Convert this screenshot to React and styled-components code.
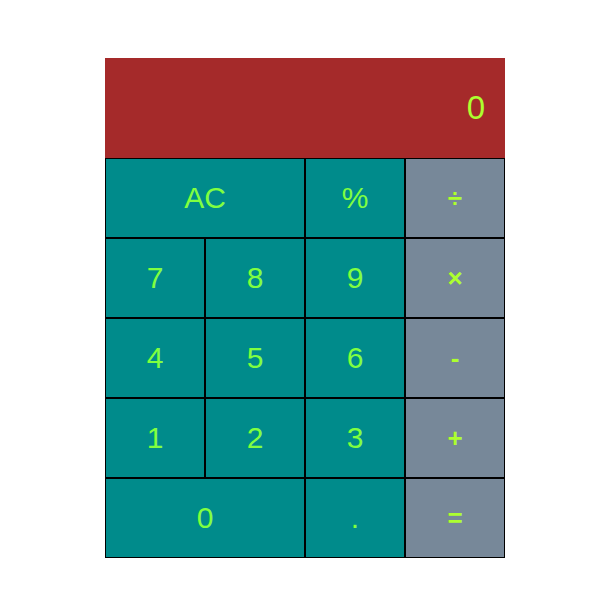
import React, { useState } from "react"
import styled, { createGlobalStyle } from "styled-components"

const GlobalStyle = createGlobalStyle`
  body {
    margin: 0;
    background-color: #fff;
    font-family: "Liberation Sans", Arial, sans-serif;
  }
`

const Page = styled.div`
  padding: 58px 0 0 105px;
`

const Calculator = styled.div`
  width: 400px;
`

const Display = styled.div`
  height: 100px;
  box-sizing: border-box;
  padding-right: 20px;
  display: flex;
  align-items: center;
  justify-content: flex-end;
  background-color: #a52a2a;
  color: #adff2f;
  font-size: 33px;
`

const Keys = styled.div`
  display: grid;
  grid-template-columns: repeat(4, 100px);
  grid-auto-rows: 80px;
`

const Key = styled.button`
  grid-column: span ${(props) => props.$span || 1};
  box-sizing: border-box;
  margin: 0;
  padding: 0;
  border: 1px solid #000;
  background-color: ${(props) => (props.$op ? "#778899" : "#008b8b")};
  color: ${(props) => (props.$op ? "#adff2f" : "#80ff40")};
  font-family: "Liberation Sans", Arial, sans-serif;
  font-size: ${(props) => (props.$op ? "26px" : "30px")};
  font-weight: ${(props) => (props.$op ? "bold" : "normal")};
  cursor: pointer;
`

const keys = [
  { label: "AC", span: 2 },
  { label: "%" },
  { label: "÷", op: true },
  { label: "7" },
  { label: "8" },
  { label: "9" },
  { label: "×", op: true },
  { label: "4" },
  { label: "5" },
  { label: "6" },
  { label: "-", op: true },
  { label: "1" },
  { label: "2" },
  { label: "3" },
  { label: "+", op: true },
  { label: "0", span: 2 },
  { label: "." },
  { label: "=", op: true },
]

function App() {
  const [Value, setValue] = useState("0")

  const onPress = (label) => {
    if (label === "AC") setValue("0")
  }

  return (
    <>
      <GlobalStyle />
      <Page>
        <Calculator>
          <Display>{Value}</Display>
          <Keys>
            {keys.map((k) => (
              <Key
                key={k.label}
                $span={k.span}
                $op={k.op}
                onClick={() => onPress(k.label)}
              >
                {k.label}
              </Key>
            ))}
          </Keys>
        </Calculator>
      </Page>
    </>
  )
}

export default App
